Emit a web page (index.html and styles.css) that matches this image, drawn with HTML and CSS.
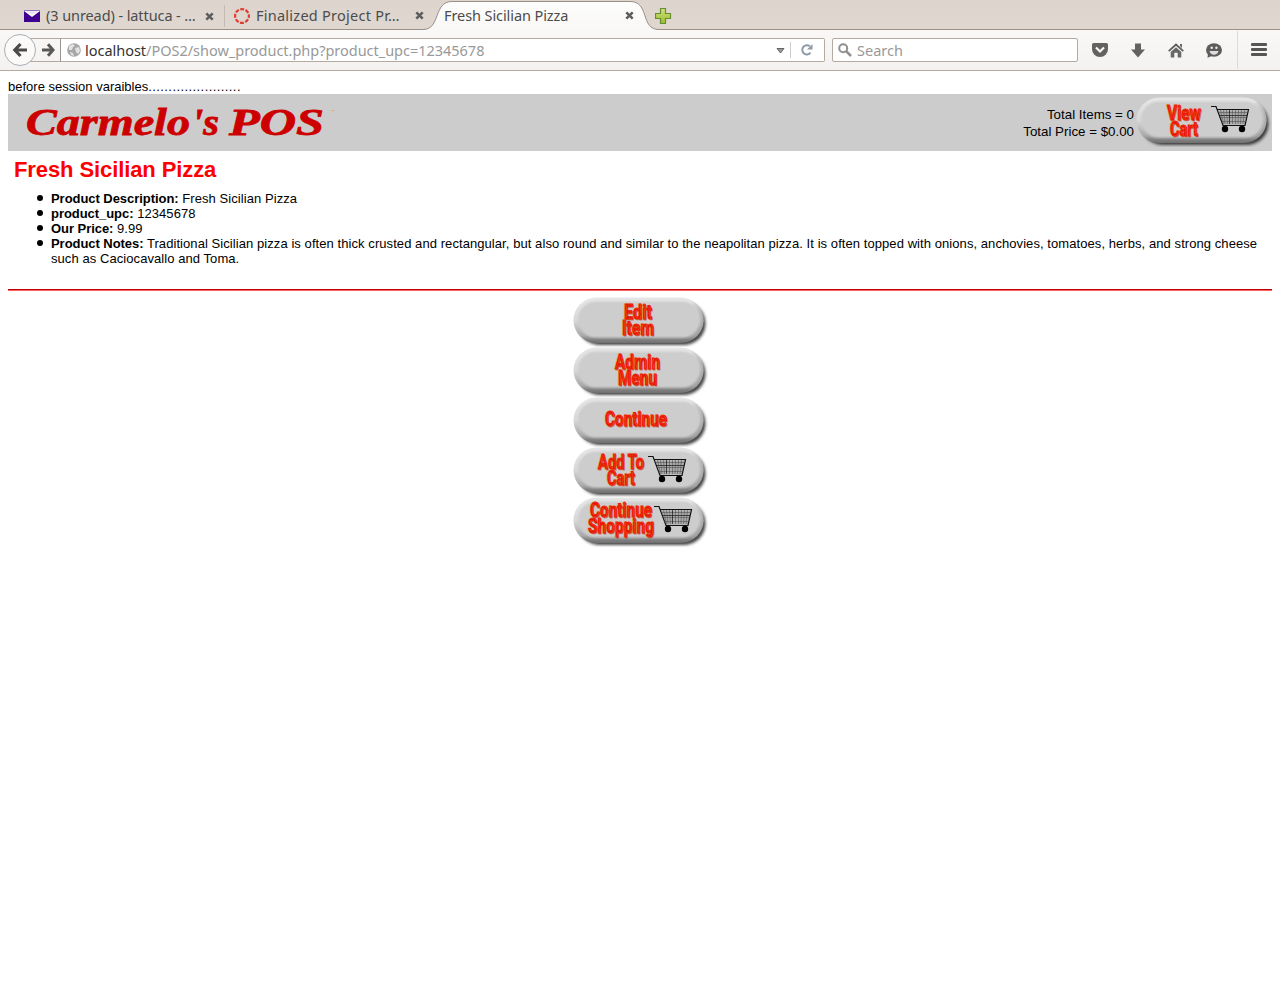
FILE: index.html
```html
<!DOCTYPE html>
<html lang="en">
<head>
<meta charset="utf-8">
<title>Fresh Sicilian Pizza</title>
<link rel="stylesheet" href="styles.css">
</head>
<body>
<svg class="defs" width="0" height="0" aria-hidden="true">
  <defs>
    <linearGradient id="rim" x1="0" y1="0" x2="0" y2="1">
      <stop offset="0" stop-color="#e6e6e6"/><stop offset=".12" stop-color="#e4e4e4"/><stop offset=".5" stop-color="#d8d8d8"/><stop offset=".84" stop-color="#a8a8a8"/><stop offset=".93" stop-color="#808080"/><stop offset="1" stop-color="#707070"/>
    </linearGradient>
    <linearGradient id="side" x1="0" y1="0" x2="1" y2="0">
      <stop offset=".9" stop-color="#888" stop-opacity="0"/><stop offset="1" stop-color="#888" stop-opacity=".55"/>
    </linearGradient>
    <linearGradient id="plus" x1="0" y1="0" x2="0" y2="1"><stop offset="0" stop-color="#cfe07c"/><stop offset="1" stop-color="#9cbd2c"/></linearGradient>
    <linearGradient id="tabfill" x1="0" y1="0" x2="0" y2="1"><stop offset="0" stop-color="#fdfdfc"/><stop offset="1" stop-color="#f9f8f6"/></linearGradient>
    <filter id="soft1" x="-10%" y="-20%" width="120%" height="140%"><feGaussianBlur stdDeviation="1.4"/></filter>
    <filter id="soft2" x="-10%" y="-20%" width="120%" height="140%"><feGaussianBlur stdDeviation="1"/></filter>
    <symbol id="pill" viewBox="0 0 135 50">
      <rect x="5" y="5" width="127.500" height="43" rx="21.500" fill="#222" opacity=".85" filter="url(#soft1)"/>
      <rect x=".5" y=".5" width="130" height="45.500" rx="22.700" fill="url(#rim)"/>
      <rect x=".5" y=".5" width="130" height="45.500" rx="22.700" fill="url(#side)"/>
      <rect x="5" y="4.500" width="122" height="36" rx="18" fill="#cdcdcd" filter="url(#soft2)"/>
      <rect x="7" y="6" width="118.500" height="33" rx="16" fill="#cdcdcd"/>
    </symbol>
    <symbol id="cart" viewBox="0 0 39 28">
      <path d="M7 5.500h29.500l-2.700 14H12z" fill="#aaa"/>
      <g fill="none" stroke="#111">
        <path d="M0 1.500h5L12 20.500h22L37.500 4.500H6" stroke-width="1.200"/>
        <path d="M9.500 5l3 14M12.500 5l1.500 14M15.500 5l1 14M21.500 5v14M24.500 5v14M27.500 5l-.5 14M30.500 5l-1 14M33.500 5l-1.500 14M7 7.500h30M9 12.500h27M10 16.500h25" stroke-width=".5" stroke="#444"/>
        <path d="M18.500 5v14M8 10.500h28" stroke-width=".7"/>
      </g>
      <circle cx="14" cy="24" r="3.200"/><circle cx="31" cy="24" r="3.200"/>
    </symbol>
    <symbol id="close" viewBox="0 0 9 9"><path d="M1.300 1.300l6.400 6.400M7.700 1.300l-6.400 6.400" stroke="#5d5d5b" stroke-width="2.500"/></symbol>
  </defs>
</svg>

<div class="tabs">
  <div class="tab t1">
    <svg width="16" height="12"><path d="M0 0h16v12H0z" fill="#400090"/><path d="M0 0h16v1L8 7 0 1z" fill="#fff"/><path d="M1 0h14L8 5z" fill="#ede5f4"/><path d="M0 0h16" stroke="#400090"/></svg>
    <span class="label l1">(3 unread) - lattuca - …</span>
    <svg class="x" width="9" height="9"><use href="#close"/></svg>
  </div>
  <div class="tab t2">
    <svg width="16" height="16"><circle cx="8" cy="8" r="6.900" fill="none" stroke="#e23b30" stroke-width="2.200" stroke-dasharray="3.900 1.520" stroke-dashoffset="1.950"/></svg>
    <span class="label l2">Finalized Project Pr…</span>
    <svg class="x" width="9" height="9"><use href="#close"/></svg>
  </div>
  <div class="tab t3">
    <svg class="shape" width="240" height="30" viewBox="0 0 240 30"><path d="M0 29.500C18 29.500 10 1.500 29 1.500H207C227 1.500 217 29.500 236 29.500V30H0z" fill="url(#tabfill)"/><path d="M0 29.500C18 29.500 10 1.500 29 1.500H207C227 1.500 217 29.500 236 29.500" fill="none" stroke="#999087"/></svg>
    <span class="label l3">Fresh Sicilian Pizza</span>
    <svg class="x" width="9" height="9"><use href="#close"/></svg>
  </div>
  <svg class="plus" width="17" height="17"><path d="M5.500 .5h5v5h5v5h-5v5h-5v-5h-5v-5h5z" fill="url(#plus)" stroke="#668f30" stroke-width="1.200"/></svg>
</div>

<div class="nav">
  <div class="back"><svg width="16" height="16"><path d="M8.500 2L2.800 8l5.700 6M3 8h12" fill="none" stroke="#4a4a4a" stroke-width="3.200"/></svg></div>
  <div class="forward"><svg width="13" height="14"><path d="M6 1.200L11 7l-5 5.800M0 7h11" fill="none" stroke="#585858" stroke-width="3"/></svg></div>
  <div class="url">
    <svg class="globe" width="14" height="14"><circle cx="7" cy="7" r="6.800" fill="#a6a6a6"/><path d="M2 3l4-2 2 2-2 1-1 3-3 0zM8 5l4-1 1 4-2 3-2-2zM3 9l3 1 1 3-3-1z" fill="#e2e2e2"/></svg>
    <span class="address"><b>localhost</b>/POS2/show_product.php?product_upc=12345678</span>
    <svg class="drop" width="9" height="6"><path d="M1 .5h7L4.500 5z" fill="#999" stroke="#666"/></svg>
    <span class="split"></span>
    <svg class="reload" width="12" height="12"><path d="M9.500 8.700A4.600 4.600 0 1 1 8.800 2.300" fill="none" stroke="#8f9ba6" stroke-width="2"/><path d="M11.500 0v5.500H6z" fill="#8f9ba6"/></svg>
  </div>
  <div class="search">
    <svg width="14" height="14"><circle cx="5.200" cy="5.200" r="4" fill="none" stroke="#909090" stroke-width="2"/><path d="M8 8l5 5" stroke="#909090" stroke-width="2.500"/></svg>
    <span>Search</span>
  </div>
  <div class="tools">
    <svg width="16" height="15"><path d="M1.500 0h13Q16 0 16 1.500V6a8 8 0 0 1-16 0V1.500Q0 0 1.500 0z" fill="#626262"/><path d="M4 4.500l4 4 4-4" fill="none" stroke="#f8f7f5" stroke-width="2.200"/></svg>
    <svg width="16" height="15"><path d="M5 .5h6v6h4L8 14.500 1 6.500h4z" fill="#626262"/></svg>
    <svg width="16" height="15"><path d="M.7 8.200L8 1.500l7.300 6.700" fill="none" stroke="#5c5c5c" stroke-width="1.700"/><path d="M12 1h2v4l-2-2zM8 4.200l5.300 4.800v5.500H9.700V9.800H6.300v4.700H2.700V9z" fill="#686868"/></svg>
    <svg width="16" height="15"><ellipse cx="8" cy="7" rx="8" ry="6.700" fill="#5c5c5c"/><path d="M2 10l-.5 4.800L7 12.500z" fill="#5c5c5c"/><path d="M3.500 8h9q-1 3.800-4.500 3.800T3.500 8z" fill="#ddd"/><circle cx="5.700" cy="4.800" r="1.200" fill="#eee"/><circle cx="10.400" cy="4.800" r="1.200" fill="#eee"/></svg>
    <svg class="menu" width="16" height="13"><g fill="#555"><rect width="16" height="3" rx="1"/><rect y="5" width="16" height="3" rx="1"/><rect y="10" width="16" height="3" rx="1"/></g></svg>
  </div>
</div>

<main>
  <div class="debug">before session varaibles<span class="dots">.......................</span></div>
  <header>
    <svg class="logo" width="320" height="40"><text x="1" y="32" textLength="164" lengthAdjust="spacingAndGlyphs">Carmelo</text><text x="167" y="32" textLength="27" lengthAdjust="spacingAndGlyphs">'s</text><text x="204" y="32" textLength="95" lengthAdjust="spacingAndGlyphs">POS</text><path d="M307 7.500h2" stroke="#ef9b52"/></svg>
    <div class="totals">Total Items = 0<br>Total Price = $0.00</div>
    <svg class="button" width="135" height="50"><use href="#pill"/><g class="caption"><text x="31" y="23" textLength="34" lengthAdjust="spacingAndGlyphs">View</text><text x="34" y="39" textLength="28" lengthAdjust="spacingAndGlyphs">Cart</text></g><use href="#cart" x="75" y="8" width="39" height="28"/></svg>
  </header>
  <h1>Fresh Sicilian Pizza</h1>
  <ul>
    <li><b>Product Description:</b> Fresh Sicilian Pizza</li>
    <li><b>product_upc:</b> 12345678</li>
    <li><b>Our Price:</b> 9.99</li>
    <li><b>Product Notes:</b> Traditional Sicilian pizza is often thick crusted and rectangular, but also round and similar to the neapolitan pizza. It is often topped with onions, anchovies, tomatoes, herbs, and strong cheese such as Caciocavallo and Toma.</li>
  </ul>
  <div class="rule"></div>
  <div class="actions">
    <svg class="button" width="135" height="50"><use href="#pill"/><g class="caption"><text x="51" y="22" textLength="28" lengthAdjust="spacingAndGlyphs">Edit</text><text x="49" y="38" textLength="32" lengthAdjust="spacingAndGlyphs">Item</text></g></svg>
    <svg class="button" width="135" height="50"><use href="#pill"/><g class="caption"><text x="42" y="22" textLength="45" lengthAdjust="spacingAndGlyphs">Admin</text><text x="45" y="38" textLength="39" lengthAdjust="spacingAndGlyphs">Menu</text></g></svg>
    <svg class="button" width="135" height="50"><use href="#pill"/><g class="caption"><text x="32" y="29" textLength="62" lengthAdjust="spacingAndGlyphs">Continue</text></g></svg>
    <svg class="button" width="135" height="50"><use href="#pill"/><g class="caption"><text x="25" y="22" textLength="46" lengthAdjust="spacingAndGlyphs">Add To</text><text x="34" y="38" textLength="28" lengthAdjust="spacingAndGlyphs">Cart</text></g><use href="#cart" x="75" y="8" width="39" height="28"/></svg>
    <svg class="button" width="135" height="50"><use href="#pill"/><g class="caption"><text x="17" y="20" textLength="62" lengthAdjust="spacingAndGlyphs">Continue</text><text x="15" y="36" textLength="66" lengthAdjust="spacingAndGlyphs">Shopping</text></g><use href="#cart" x="81" y="8" width="39" height="28"/></svg>
  </div>
</main>
</body>
</html>
```
FILE: styles.css
```css
* { box-sizing: border-box; }
body { margin: 0; background: #fff; color: #000; font: 13px/15px "Liberation Sans", Arial, sans-serif; }
svg { display: block; flex: none; }
.defs { position: absolute; }

.tabs, .nav { font-family: "Noto Sans", "Open Sans", sans-serif; font-size: 14.5px; color: #4c4c4c; }
.tabs { display: flex; height: 30px; background: linear-gradient(#ddd4cd, #dfd7d0); border-bottom: 1px solid #999087; }
.tab { display: flex; align-items: center; height: 31px; position: relative; }
.t1 { width: 225px; padding: 0 10px 0 24px; border-right: 1px solid #c3bab2; height: 22px; margin-top: 5px; }
.t2 { width: 198px; padding-left: 9px; }
.t3 { width: 228px; padding-left: 21px; }
.label { white-space: nowrap; line-height: 20px; margin-bottom: 2px; position: relative; }
.t1 .label { margin-left: 6px; }
.t2 .label { margin-left: 6px; }
.l1 { letter-spacing: -.09px; }
.l2 { letter-spacing: .25px; }
.l3 { letter-spacing: -.09px; }
.x { margin-left: auto; position: relative; }
.t2 .x { margin-right: -1px; }
.t3 .x { margin-right: 17px; }
.shape { position: absolute; left: 0; top: 0; }
.plus { margin: 8px 0 0 4px; }

.nav { display: flex; align-items: center; height: 41px; background: linear-gradient(#f9f8f6, #f3f2f0); border-bottom: 1px solid #b5aaa0; padding-left: 4px; }
.back { display: flex; align-items: center; justify-content: center; width: 32px; height: 32px; border: 1px solid #a9afb6; border-radius: 50%; background: #fbfaf9; z-index: 1; }
.forward { display: flex; align-items: center; justify-content: flex-end; width: 33px; height: 24px; margin-left: -8px; padding-right: 5px; border: 1px solid #b5aaa0; border-right-color: #9a9590; }
.url, .search { display: flex; align-items: center; height: 24px; background: #fff; border: 1px solid #b5aaa0; border-radius: 2px; }
.url { width: 764px; border-left: 0; border-radius: 0 2px 2px 0; padding: 0 11px 0 6px; }
.address { margin-left: 4px; color: #999; white-space: nowrap; letter-spacing: -.02px; }
.address b { font-weight: 400; color: #333; }
.drop { margin: 2px 0 0 auto; }
.split { width: 1px; height: 16px; background: #d0ccc8; margin: 0 10px 0 5px; }
.search { width: 246px; margin-left: 7px; padding-left: 5px; gap: 5px; color: #999; }
.tools { display: flex; align-items: center; gap: 22px; margin-left: 14px; }
.tools .menu { box-sizing: content-box; padding: 12px 0 13px 13px; border-left: 1px solid #dddad7; margin-left: -7px; }

main { padding: 8px 8px 0; }
.dots { letter-spacing: .42px; }
header { display: flex; align-items: center; height: 57px; background: #ccc; padding: 0 0 0 17px; }
.logo { margin-top: 1px; }
.logo text { font: italic 700 37px "Liberation Serif", serif; fill: #c00; stroke: #c00; stroke-width: .8px; }
.totals { margin-left: auto; text-align: right; line-height: 17px; font-size: 13.33px; padding-right: 2px; }
h1 { margin: 8px 0 10px 6px; font-size: 22px; line-height: 22px; letter-spacing: -.1px; color: #f00; }
ul { margin: 10px 12px 23px 6px; padding-left: 37px; list-style: none; letter-spacing: .07px; }
ul b { letter-spacing: -.05px; }
li::before { content: ""; float: left; width: 6px; height: 6px; margin: 4px 0 0 -14px; border-radius: 50%; background: #000; }
.rule { height: 2px; border-top: 1px solid #c00000; background: #ff6060; }
.actions { display: flex; flex-direction: column; align-items: center; padding-top: 6px; }
header .button { margin: -1px 1px 0 0; }
.caption { font: 700 20px "Roboto", "Open Sans", sans-serif; fill: #f50d00; stroke: #ea1000; stroke-width: .8px; text-shadow: -1px -.5px 0 #ffac3288, 1px 1px 0 #b8272088; }
```
